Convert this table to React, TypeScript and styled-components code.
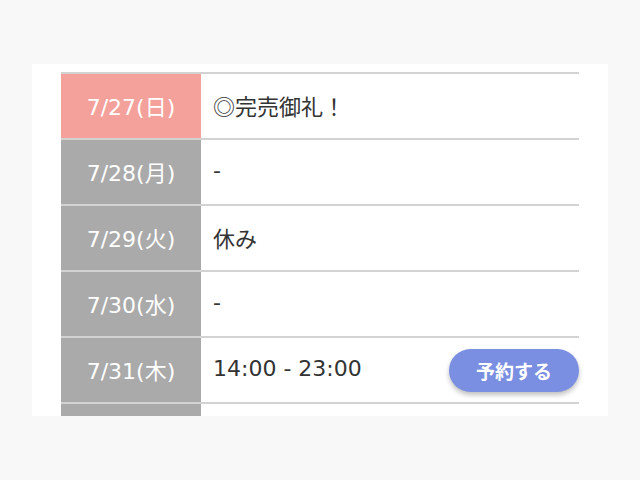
import React from 'react';
import styled, { createGlobalStyle } from 'styled-components';

const GlobalStyle = createGlobalStyle`
  body {
    margin: 0;
    background-color: #f8f8f8;
    font-family: "DejaVu Sans", "Noto Sans CJK JP", sans-serif;
  }
`;

const Panel = styled.div`
  margin: 64px 0 0 32px;
  width: 576px;
  height: 352px;
  box-sizing: border-box;
  padding: 8px 29px 0;
  background-color: #fff;
  overflow: hidden;
`;

const Table = styled.div`
  display: flex;
  flex-direction: column;
`;

const Row = styled.div`
  display: flex;
  height: 66px;
  box-sizing: border-box;
  border-top: 2px solid #d2d2d2;
`;

const DateCell = styled.div<{ $holiday?: boolean }>`
  flex: 0 0 140px;
  display: flex;
  align-items: center;
  justify-content: center;
  padding-bottom: 3px;
  background-color: ${(p) => (p.$holiday ? '#f4a19b' : '#aaaaaa')};
  color: #fff;
  font-size: 22px;
`;

const InfoCell = styled.div`
  flex: 1;
  display: flex;
  align-items: center;
  justify-content: space-between;
  padding-left: 12px;
  color: #333;
  font-size: 22px;
`;

const InfoText = styled.span`
  padding-bottom: 3px;
`;

const Mark = styled.span`
  font-family: "Noto Sans CJK JP", sans-serif;
`;

const ReserveButton = styled.button`
  width: 130px;
  height: 43px;
  border: none;
  border-radius: 22px;
  background-color: #7a8ee2;
  color: #fff;
  font-family: "Noto Sans CJK JP", sans-serif;
  font-size: 19px;
  font-weight: 700;
  box-shadow: 0 3px 5px rgba(0, 0, 0, 0.25);
  cursor: pointer;
`;

type Day = { date: string; info: string; mark?: string; holiday?: boolean; open?: boolean };

const days: Day[] = [
  { date: '7/27(日)', mark: '◎', info: '完売御礼！', holiday: true },
  { date: '7/28(月)', info: '-' },
  { date: '7/29(火)', info: '休み' },
  { date: '7/30(水)', info: '-' },
  { date: '7/31(木)', info: '14:00 - 23:00', open: true },
  { date: '8/1(金)', info: '-' },
];

const App: React.FC = () => {
  return (
    <>
      <GlobalStyle />
      <Panel>
        <Table>
          {days.map((d) => (
            <Row key={d.date}>
              <DateCell $holiday={d.holiday}>{d.date}</DateCell>
              <InfoCell>
                <InfoText>
                  {d.mark && <Mark>{d.mark}</Mark>}
                  {d.info}
                </InfoText>
                {d.open && <ReserveButton>予約する</ReserveButton>}
              </InfoCell>
            </Row>
          ))}
        </Table>
      </Panel>
    </>
  );
};

export default App;
